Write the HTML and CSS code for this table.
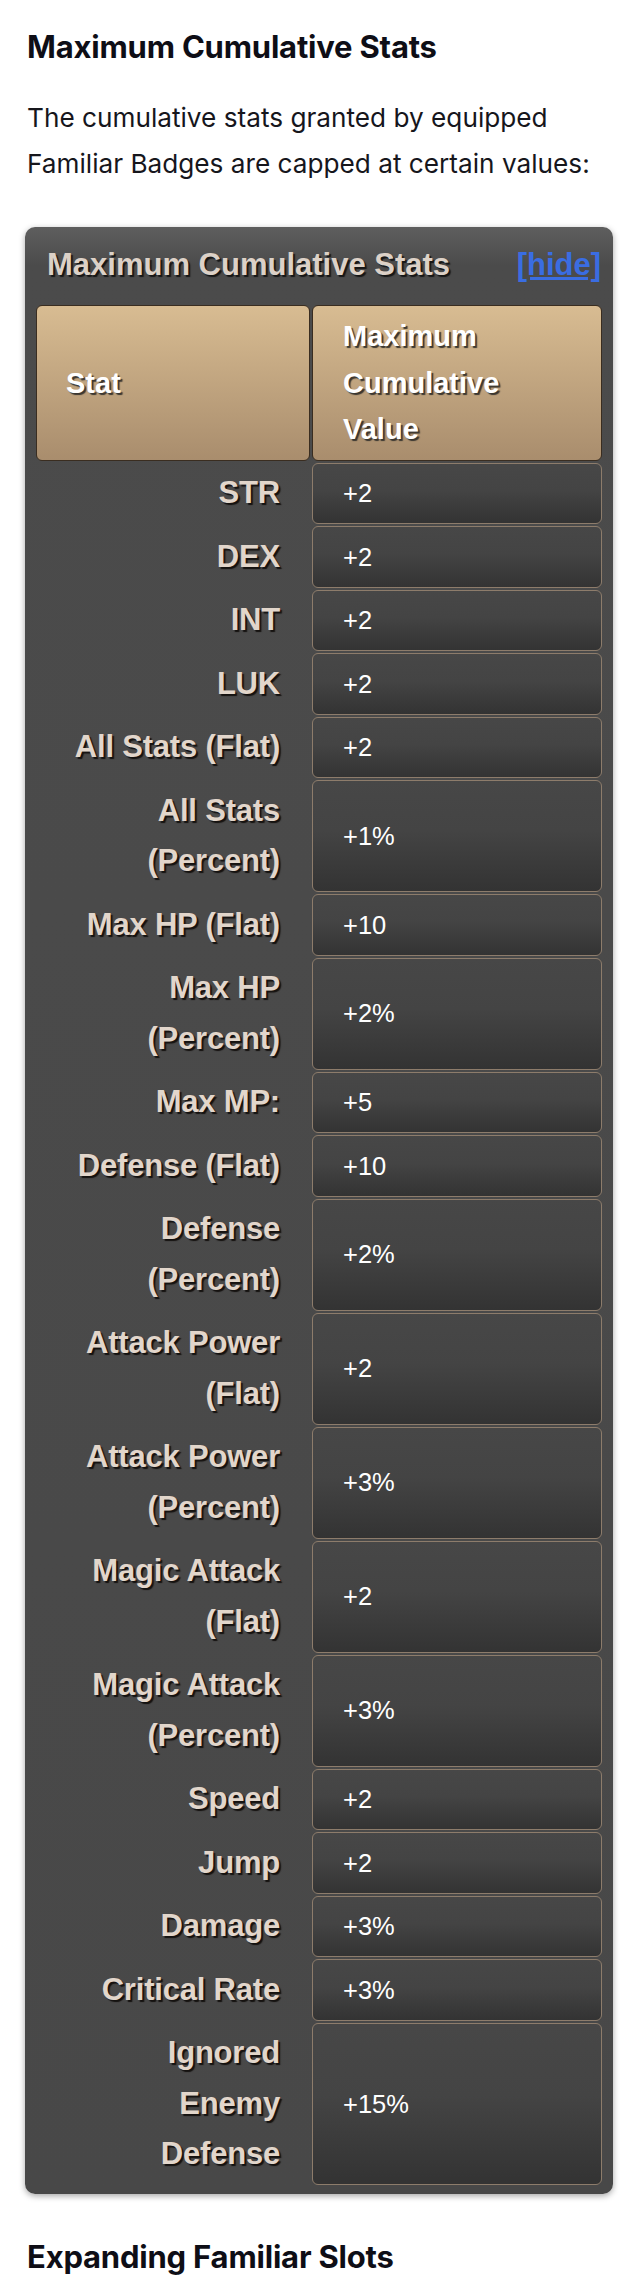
FILE: index.html
```html
<!DOCTYPE html>
<html lang="en">
<head>
<meta charset="utf-8">
<title>Maximum Cumulative Stats</title>
<link rel="stylesheet" href="styles.css">
</head>
<body>
<div class="page">
  <h2 class="section-title">Maximum Cumulative Stats</h2>
  <p class="intro">The cumulative stats granted by equipped Familiar Badges are capped at certain values:</p>
</div>
<div class="panel">
  <div class="panel-head">
    <span class="panel-title">Maximum Cumulative Stats</span>
    <a class="panel-toggle" href="#">[hide]</a>
  </div>
  <table class="stats">
    <thead>
      <tr><th class="hcell">Stat</th><th class="hcell hcell-value">Maximum Cumulative Value</th></tr>
    </thead>
    <tbody>
      <tr><th>STR</th><td>+2</td></tr>
      <tr><th>DEX</th><td>+2</td></tr>
      <tr><th>INT</th><td>+2</td></tr>
      <tr><th>LUK</th><td>+2</td></tr>
      <tr><th>All Stats (Flat)</th><td>+2</td></tr>
      <tr><th>All Stats (Percent)</th><td>+1%</td></tr>
      <tr><th>Max HP (Flat)</th><td>+10</td></tr>
      <tr><th>Max HP (Percent)</th><td>+2%</td></tr>
      <tr><th>Max MP:</th><td>+5</td></tr>
      <tr><th>Defense (Flat)</th><td>+10</td></tr>
      <tr><th>Defense (Percent)</th><td>+2%</td></tr>
      <tr><th>Attack Power (Flat)</th><td>+2</td></tr>
      <tr><th>Attack Power (Percent)</th><td>+3%</td></tr>
      <tr><th>Magic Attack (Flat)</th><td>+2</td></tr>
      <tr><th>Magic Attack (Percent)</th><td>+3%</td></tr>
      <tr><th>Speed</th><td>+2</td></tr>
      <tr><th>Jump</th><td>+2</td></tr>
      <tr><th>Damage</th><td>+3%</td></tr>
      <tr><th>Critical Rate</th><td>+3%</td></tr>
      <tr><th>Ignored Enemy Defense</th><td>+15%</td></tr>
    </tbody>
  </table>
</div>
<div class="page">
  <h2 class="section-title next-title">Expanding Familiar Slots</h2>
</div>
</body>
</html>
```

FILE: styles.css
```css
html, body {
  margin: 0;
  padding: 0;
  background: #ffffff;
}

body {
  font-family: Inter, "Noto Sans", sans-serif;
  color: #14141a;
}

.page {
  padding: 0 27px;
}

.section-title {
  margin: 0;
  padding-top: 28px;
  font-size: 31px;
  line-height: 37px;
  font-weight: 700;
  color: #0e0e16;
  letter-spacing: -0.2px;
}

.intro {
  margin: 30px 0 0;
  font-size: 26.2px;
  line-height: 46px;
  color: #16161c;
}

.panel {
  position: relative;
  margin: 40px 27px 0 25px;
  padding: 0 9px 7px;
  border-radius: 10px;
  background: linear-gradient(#5e5e5e 0, #4b4b4b 38px, #484848 100%);
  box-shadow: 0 2px 6px rgba(0, 0, 0, 0.35);
}

.panel::before {
  content: "";
  position: absolute;
  left: -8px;
  right: -10px;
  top: 22px;
  bottom: 22px;
  z-index: -1;
  background: linear-gradient(90deg, #f2f2f2 0, #bdbdbd 8px, #4c4c4c 8px, #4c4c4c 100%);
}

.panel-head {
  height: 76px;
  display: flex;
  align-items: center;
  justify-content: space-between;
  padding: 0 3px 0 13px;
  font-family: "Liberation Sans", Arial, sans-serif;
  font-weight: 700;
  font-size: 31px;
}

.panel-title {
  color: #dcd1c7;
  text-shadow: 2px 2px 1px #161616;
}

.panel-toggle {
  color: #3a6de2;
  text-decoration: underline;
}

.stats {
  width: 570px;
  border-collapse: separate;
  border-spacing: 2px;
  font-family: "Liberation Sans", Arial, sans-serif;
  table-layout: fixed;
}

.stats .hcell {
  width: 274px;
  box-sizing: border-box;
  padding: 7px 29px;
  border: 1px solid #3a2d20;
  border-radius: 6px;
  background: linear-gradient(#d8bc92, #a98d6d);
  color: #ffffff;
  text-align: left;
  font-size: 29px;
  line-height: 46.5px;
  font-weight: 700;
  text-shadow: 2px 2px 1px #3a3630;
  vertical-align: middle;
}

.stats .hcell-value {
  width: 290px;
  padding-left: 30px;
}

.stats tbody th {
  padding: 4.5px 29px 4.5px 25px;
  border: 1px solid transparent;
  text-align: right;
  font-size: 31px;
  line-height: 50.5px;
  font-weight: 700;
  letter-spacing: -0.2px;
  color: #e2d6cb;
  text-shadow: 2px 2px 1px #151210;
  vertical-align: middle;
}

.stats tbody td {
  padding: 4.5px 30px;
  border: 1px solid #8d7c6b;
  border-radius: 6px;
  background: linear-gradient(#474747 0, #444444 45%, #333333 100%);
  color: #ffffff;
  font-size: 25.5px;
  line-height: 50.5px;
  vertical-align: middle;
}

.next-title {
  padding-top: 44px;
  padding-bottom: 20px;
}
```
